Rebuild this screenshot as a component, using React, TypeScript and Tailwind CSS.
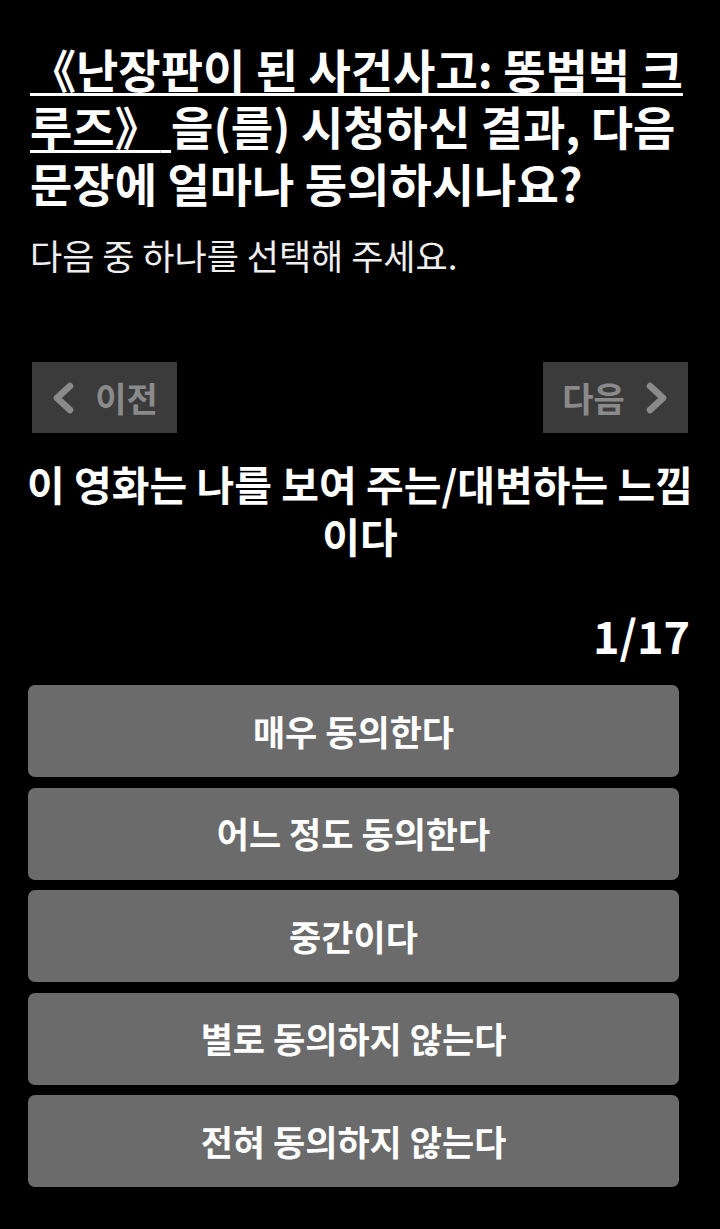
import { ReactNode } from "react";

const options = [
  "매우 동의한다",
  "어느 정도 동의한다",
  "중간이다",
  "별로 동의하지 않는다",
  "전혀 동의하지 않는다",
];

function NavButton({ children }: { children: ReactNode }) {
  return (
    <button className="flex h-[71px] w-[145px] items-center justify-center gap-[18px] bg-[#3b3b3b] text-[34px] font-bold text-[#8a8a8a]">
      {children}
    </button>
  );
}

function Chevron({ dir }: { dir: "left" | "right" }) {
  return (
    <svg width="26" height="34" viewBox="0 0 26 34" fill="none">
      <path
        d={dir === "left" ? "M19 5 L6 17 L19 29" : "M7 5 L20 17 L7 29"}
        stroke="#8a8a8a"
        strokeWidth="6.5"
        strokeLinecap="round"
        strokeLinejoin="round"
      />
    </svg>
  );
}

export default function App() {
  return (
    <div
      className="min-h-[1229px] w-[720px] bg-black text-white"
      style={{ fontFamily: '"Noto Sans CJK KR", "Noto Sans", sans-serif' }}
    >
      <div className="pl-[30px] pr-[28px] pt-[40px]">
        <h1 className="text-[46px] font-bold leading-[57px]">
          <a className="underline decoration-[3px] underline-offset-[5px]">
            {" "}《난장판이 된 사건사고: 똥범벅 크루즈》{" "}
          </a>
          을(를) 시청하신 결과, 다음 문장에 얼마나 동의하시나요?
        </h1>
        <p className="mt-[22px] text-[35px] leading-[44px] text-[#eeeeee]">
          다음 중 하나를 선택해 주세요.
        </p>
      </div>

      <div className="mt-[85px] flex justify-between px-[32px]">
        <NavButton>
          <Chevron dir="left" />
          이전
        </NavButton>
        <NavButton>
          다음
          <Chevron dir="right" />
        </NavButton>
      </div>

      <p className="mt-[24px] px-[20px] text-center text-[41px] font-bold leading-[52px]">
        이 영화는 나를 보여 주는/대변하는 느낌이다
      </p>

      <div className="mt-[49px] px-[30px] text-right text-[45px] font-bold leading-[50px]">
        1/17
      </div>

      <div className="mt-[25px] flex flex-col gap-[10.5px] pl-[28px] pr-[41px]">
        {options.map((o) => (
          <button
            key={o}
            className="flex h-[92px] items-center justify-center rounded-[7px] bg-[#6b6b6b] text-[35px] font-bold text-white"
          >
            {o}
          </button>
        ))}
      </div>
    </div>
  );
}
